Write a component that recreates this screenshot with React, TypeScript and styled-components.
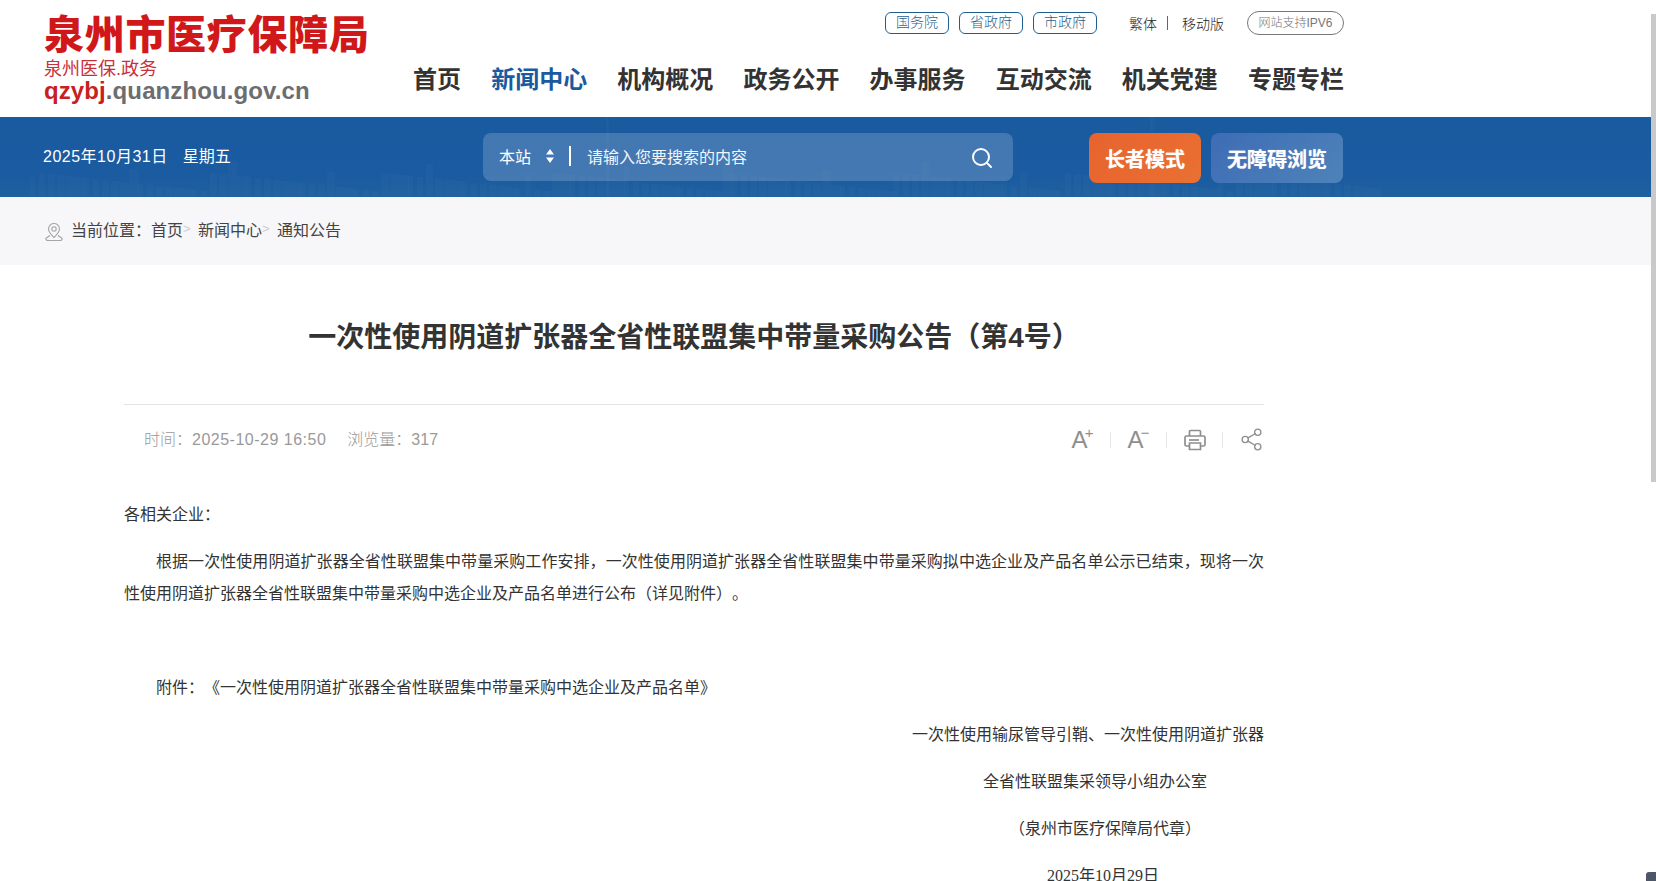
import styled, { createGlobalStyle } from "styled-components"
import { Search, Share2 } from "lucide-react"

const GlobalStyle = createGlobalStyle`
  html, body {
    margin: 0;
    padding: 0;
    background: #fff;
    overflow: hidden;
    height: 881px;
  }
  body {
    font-family: "Liberation Sans", "Noto Sans CJK SC", sans-serif;
    color: #333;
    text-spacing-trim: space-all;
  }
  * { box-sizing: border-box; }
`

const Page = styled.div`
  position: relative;
  width: 1656px;
  height: 881px;
  overflow: hidden;
`

const Scrollbar = styled.div`
  position: absolute;
  top: 14px;
  right: 0;
  width: 5px;
  height: 468px;
  background: #c9c9c9;
`

const Header = styled.header`
  width: 1301px;
  height: 117px;
  margin-left: 43px;
  display: flex;
  justify-content: space-between;
`

const Logo = styled.div`
  width: 370px;
  padding: 9px 0 0 1px;
  display: flex;
  flex-direction: column;
`

const LogoTitle = styled.div`
  font-family: "Noto Sans CJK SC", serif;
  font-weight: 900;
  font-size: 40px;
  line-height: 46px;
  letter-spacing: 0.7px;
  color: #d0181a;
  white-space: nowrap;
`

const LogoSub = styled.div`
  font-size: 18px;
  line-height: 22px;
  margin-top: 3px;
  color: #c8303a;
`

const LogoDomain = styled.div`
  font-size: 24px;
  line-height: 24px;
  margin-top: -1px;
  letter-spacing: 0.1px;
  font-weight: 700;
  color: #6c6d70;
  span { color: #c9201f; }
`

const HeaderRight = styled.div`
  width: 931px;
  display: flex;
  flex-direction: column;
  align-items: stretch;
`

const TopLinks = styled.div`
  display: flex;
  justify-content: flex-end;
  align-items: center;
  height: 24px;
  margin-top: 11px;
`

const GovLink = styled.a`
  width: 64px;
  height: 22px;
  margin-left: 10px;
  border: 1px solid #1d5f92;
  border-radius: 6px;
  font-size: 14px;
  line-height: 19px;
  font-weight: 300;
  text-align: center;
  color: #1f5f8f;
`

const PlainLinks = styled.div`
  display: flex;
  align-items: center;
  margin-left: 32px;
  font-size: 14px;
  font-weight: 300;
  color: #222;
`

const LinkDivider = styled.i`
  width: 1px;
  height: 14px;
  background: #666;
  margin: 0 14px 0 10px;
`

const IpvBadge = styled.div`
  width: 97px;
  height: 24px;
  margin-left: 23px;
  border: 1px solid #777;
  border-radius: 12px;
  font-size: 12px;
  line-height: 22px;
  font-weight: 300;
  text-align: center;
  color: #777;
`

const Nav = styled.nav`
  display: flex;
  justify-content: space-between;
  margin-top: 28px;
`

const NavItem = styled.a<{ $active?: boolean }>`
  font-size: 24px;
  line-height: 34px;
  font-weight: 700;
  color: ${props => props.$active ? "#1a5a9e" : "#333"};
`

const Banner = styled.div`
  position: relative;
  width: 1651px;
  height: 80px;
  background: linear-gradient(180deg, #1a5a9f 0%, #1a5ba1 70%, #1f609f 100%);
  overflow: hidden;
`

const Skyline = styled.svg`
  position: absolute;
  left: 0;
  bottom: 0;
  width: 1651px;
  height: 80px;
`

const BannerInner = styled.div`
  position: relative;
  width: 1301px;
  height: 80px;
  margin-left: 43px;
  display: flex;
  align-items: flex-start;
`

const DateText = styled.div`
  width: 440px;
  padding-top: 29px;
  font-size: 16px;
  line-height: 22px;
  color: #fff;
`

const DateDigits = styled.span`
  letter-spacing: 0.5px;
`

const Weekday = styled.span`
  margin-left: 15px;
`

const SearchBar = styled.div`
  width: 530px;
  height: 48px;
  margin-top: 16px;
  padding: 0 19px 2px 16px;
  display: flex;
  align-items: center;
  border-radius: 8px;
  background: rgba(255, 255, 255, 0.18);
  font-size: 16px;
  color: #fff;
`

const SiteSelect = styled.div`
  width: 46px;
`

const Arrows = styled.svg`
  width: 10px;
  height: 14px;
  margin-right: 14px;
`

const SearchDivider = styled.i`
  width: 2px;
  height: 20px;
  background: #fff;
  margin-right: 16px;
`

const Placeholder = styled.div`
  flex: 1;
  color: #f2f6fb;
`

const SearchIcon = styled(Search)`
  margin-top: 4px;
`

const ModeButton = styled.div<{ $orange?: boolean }>`
  width: ${props => props.$orange ? "112px" : "132px"};
  height: 50px;
  margin: 16px 0 0 ${props => props.$orange ? "76px" : "10px"};
  border-radius: 8px;
  font-size: 20px;
  line-height: 54px;
  font-weight: 700;
  text-align: center;
  color: #fff;
  text-shadow: 0 0 1px rgba(255, 255, 255, 0.6);
  background: ${props => props.$orange
    ? "linear-gradient(135deg, #e7632e, #ea7032)"
    : "linear-gradient(135deg, #3f6cb6, #4d83b9)"};
`

const Crumbs = styled.div`
  width: 1651px;
  height: 68px;
  background: #f7f6f8;
  padding: 0 0 5px 45px;
  display: flex;
  align-items: center;
  font-size: 16px;
  color: #444;
`

const PinIcon = styled.svg`
  width: 18px;
  height: 18px;
  margin: 7px 8px 0 0;
`

const CrumbSep = styled.span`
  width: 15px;
  font-size: 13px;
  color: #ccc;
`

const Article = styled.main`
  width: 1140px;
  margin-left: 124px;
`

const Title = styled.h1`
  margin: 53px 0 0;
  font-size: 28px;
  line-height: 40px;
  font-weight: 700;
  text-align: center;
  color: #333;
`

const Meta = styled.div`
  margin-top: 46px;
  height: 68px;
  border-top: 1px solid #e4e4e4;
  padding: 0 0 0 20px;
  display: flex;
  justify-content: space-between;
  align-items: center;
`

const MetaText = styled.div`
  font-size: 16px;
  font-weight: 300;
  color: #999;
  padding-bottom: 2px;
`

const MetaStamp = styled.span`
  letter-spacing: 0.5px;
`

const MetaViews = styled.span`
  margin-left: 21px;
`

const Tools = styled.div`
  display: flex;
  align-items: center;
  padding-top: 2px;
  color: #8f8f8f;
`

const Tool = styled.div<{ $last?: boolean }>`
  width: ${props => props.$last ? "41px" : "55px"};
  height: 32px;
  display: flex;
  align-items: center;
  justify-content: ${props => props.$last ? "flex-end" : "center"};
`

const ToolGap = styled.i`
  width: 1px;
  height: 16px;
  background: #e8e8e8;
`

const FontTool = styled.div`
  font-size: 24px;
  line-height: 24px;
  color: #8f8f8f;
  sup {
    font-size: 15px;
    line-height: 10px;
    vertical-align: 10px;
    margin-left: -3px;
  }
`

const Body = styled.div`
  margin-top: 27px;
  font-family: "Liberation Serif", "Noto Sans CJK SC", serif;
  font-size: 16px;
  line-height: 32px;
  color: #333;
`

const Para = styled.p<{ $indent?: boolean; $right?: number }>`
  margin: 0 0 15px;
  min-height: 32px;
  text-indent: ${props => props.$indent ? "2em" : "0"};
  text-align: ${props => props.$right !== undefined ? "right" : "justify"};
  padding-right: ${props => props.$right ?? 0}px;
`

const Corner = styled.div`
  position: absolute;
  right: 0;
  bottom: 0;
  width: 10px;
  height: 9px;
  border-radius: 3px 0 0 0;
  background: #4c5666;
`

const navItems = ["首页", "新闻中心", "机构概况", "政务公开", "办事服务", "互动交流", "机关党建", "专题专栏"]

// faint city picture behind the banner
const skyline = Array.from({ length: 150 }, (_, i) => {
  const h = 6 + ((i * 37) % 19) + (i % 11 === 0 ? 14 : 0)
  return { x: 30 + i * 9, w: 5 + (i * 13) % 6, h }
})

export default function App() {
  return (
    <Page>
      <GlobalStyle />
      <Scrollbar />
      <Header>
        <Logo>
          <LogoTitle>泉州市医疗保障局</LogoTitle>
          <LogoSub>泉州医保.政务</LogoSub>
          <LogoDomain><span>qzybj</span>.quanzhou.gov.cn</LogoDomain>
        </Logo>
        <HeaderRight>
          <TopLinks>
            <GovLink>国务院</GovLink>
            <GovLink>省政府</GovLink>
            <GovLink>市政府</GovLink>
            <PlainLinks>繁体<LinkDivider />移动版</PlainLinks>
            <IpvBadge>网站支持IPV6</IpvBadge>
          </TopLinks>
          <Nav>
            {navItems.map(item => (
              <NavItem key={item} $active={item === "新闻中心"}>{item}</NavItem>
            ))}
          </Nav>
        </HeaderRight>
      </Header>

      <Banner>
        <Skyline viewBox="0 0 1651 80" aria-hidden="true">
          {skyline.map(b => (
            <rect key={b.x} x={b.x} y={80 - b.h} width={b.w} height={b.h} fill="#fff" opacity="0.018" />
          ))}
          <rect x="606" y="0" width="3" height="80" fill="#fff" opacity="0.025" />
          <rect x="1150" y="0" width="4" height="80" fill="#fff" opacity="0.02" />
        </Skyline>
        <BannerInner>
          <DateText><DateDigits>2025年10月31日</DateDigits><Weekday>星期五</Weekday></DateText>
          <SearchBar>
            <SiteSelect>本站</SiteSelect>
            <Arrows viewBox="0 0 10 14" aria-hidden="true">
              <path d="M5 0 9 5.5H1zM5 14 1 8.5h8z" fill="#fff" />
            </Arrows>
            <SearchDivider />
            <Placeholder>请输入您要搜索的内容</Placeholder>
            <SearchIcon size={24} strokeWidth={2} />
          </SearchBar>
          <ModeButton $orange>长者模式</ModeButton>
          <ModeButton>无障碍浏览</ModeButton>
        </BannerInner>
      </Banner>

      <Crumbs>
        <PinIcon viewBox="0 0 18 18" fill="none" stroke="#a5a5a5" strokeWidth="1.1" aria-hidden="true">
          <path d="M9 14.5C6 11.5 3.5 9 3.5 6a5.5 5.5 0 0 1 11 0c0 3-2.500 5.500-5.500 8.500z" />
          <circle cx="9" cy="6" r="2.2" />
          <path d="M5 12.500 1 15.200c-.5.8.5 2.300 1.500 2.300h13c1 0 2-1.500 1.500-2.300L13 12.500" />
        </PinIcon>
        当前位置：首页<CrumbSep>&gt;</CrumbSep>新闻中心<CrumbSep>&gt;</CrumbSep>通知公告
      </Crumbs>

      <Article>
        <Title>一次性使用阴道扩张器全省性联盟集中带量采购公告（第4号）</Title>
        <Meta>
          <MetaText>时间：<MetaStamp>2025-10-29 16:50</MetaStamp><MetaViews>浏览量：317</MetaViews></MetaText>
          <Tools>
            <Tool><FontTool>A<sup>+</sup></FontTool></Tool>
            <ToolGap />
            <Tool><FontTool>A<sup>−</sup></FontTool></Tool>
            <ToolGap />
            <Tool>
              <svg width="24" height="24" viewBox="0 0 24 24" fill="none" stroke="currentColor" strokeWidth="1.7" aria-hidden="true">
                <path d="M6.500 8V3.500a1 1 0 0 1 1-1h9a1 1 0 0 1 1 1V8" />
                <path d="M6 18H3.500a1.500 1.500 0 0 1-1.500-1.500v-7A1.500 1.500 0 0 1 3.500 8h17A1.500 1.500 0 0 1 22 9.500v7a1.500 1.500 0 0 1-1.500 1.500H18" />
                <path d="M6 12h10" />
                <path d="M6.500 15h11v6.500h-11z" />
              </svg>
            </Tool>
            <ToolGap />
            <Tool $last><Share2 size={25} strokeWidth={1.3} /></Tool>
          </Tools>
        </Meta>
        <Body>
          <Para>各相关企业：</Para>
          <Para $indent>根据一次性使用阴道扩张器全省性联盟集中带量采购工作安排，一次性使用阴道扩张器全省性联盟集中带量采购拟中选企业及产品名单公示已结束，现将一次性使用阴道扩张器全省性联盟集中带量采购中选企业及产品名单进行公布（详见附件）。</Para>
          <Para />
          <Para $indent>附件：《一次性使用阴道扩张器全省性联盟集中带量采购中选企业及产品名单》</Para>
          <Para $right={0}>一次性使用输尿管导引鞘、一次性使用阴道扩张器</Para>
          <Para $right={57}>全省性联盟集采领导小组办公室</Para>
          <Para $right={63}>（泉州市医疗保障局代章）</Para>
          <Para $right={105}>2025年10月29日</Para>
        </Body>
      </Article>
      <Corner />
    </Page>
  )
}
